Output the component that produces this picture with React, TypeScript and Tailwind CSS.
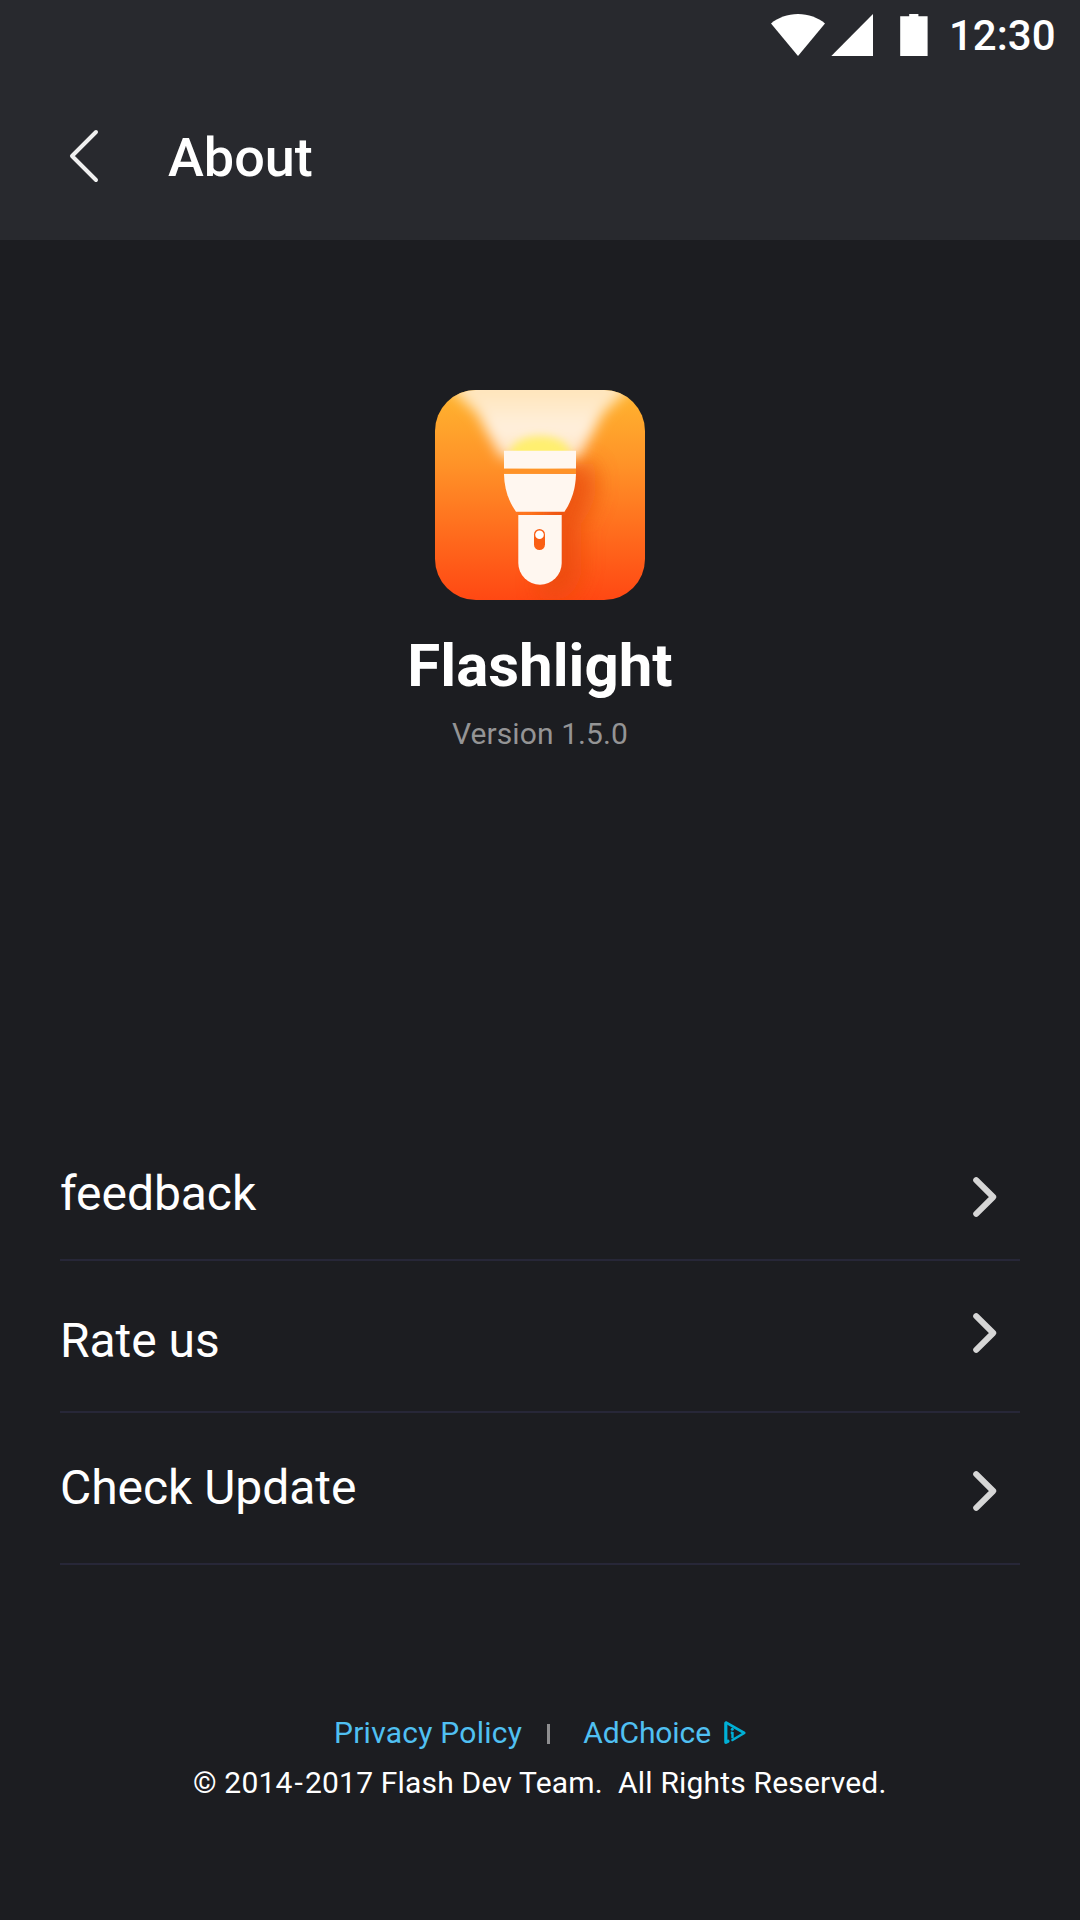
function StatusBar() {
  return (
    <div className="flex h-[72px] items-start">
      <svg className="mt-[14px] ml-[771px] h-[42px] w-[54px]" viewBox="0 0 54 42" fill="#fff">
        <path d="M27 42 0 9.400C7 3.600 16.500 0 27 0s20 3.600 27 9.400Z" />
      </svg>
      <svg className="mt-[14px] ml-[6px] h-[42px] w-[42px]" viewBox="0 0 42 42" fill="#fff">
        <path d="M0.300 42 42 0V42Z" />
      </svg>
      <svg className="mt-[14px] ml-[27px] h-[42px] w-[28px]" viewBox="0 0 28 42" fill="#fff">
        <path d="M9.200 0H18.400V2.200H27.600V42H0.200V2.200H9.200Z" />
      </svg>
      <span className="ml-[21px] text-[42px] leading-[71px] font-medium">12:30</span>
    </div>
  );
}

function Header() {
  return (
    <header className="h-[240px] bg-[#28292e]">
      <StatusBar />
      <div className="flex h-[168px] items-start">
        <svg
          className="mt-[56px] ml-[68px] h-[56px] w-[32px]"
          viewBox="0 0 32 56"
          fill="none"
          stroke="#f0f0f0"
          strokeWidth="4"
          strokeLinecap="round"
          strokeLinejoin="round"
        >
          <path d="M28 4 4 28l24 24" />
        </svg>
        <h1 className="mt-[50px] ml-[68px] text-[54px] leading-[72px] font-medium">About</h1>
      </div>
    </header>
  );
}

function AppIcon() {
  return (
    <svg className="h-[210px] w-[210px]" viewBox="0 0 210 210">
      <defs>
        <linearGradient id="base" x1="0" y1="0" x2="0" y2="1">
          <stop offset="0" stopColor="#ffb530" />
          <stop offset="0.35" stopColor="#ff9328" />
          <stop offset="0.75" stopColor="#ff641b" />
          <stop offset="1" stopColor="#ff4813" />
        </linearGradient>
        <linearGradient id="beam" gradientUnits="userSpaceOnUse" x1="0" y1="0" x2="0" y2="66">
          <stop offset="0" stopColor="#ffe5bb" />
          <stop offset="0.6" stopColor="#fff0de" />
          <stop offset="1" stopColor="#fff0de" stopOpacity="0.85" />
        </linearGradient>
        <filter id="soft" x="-30%" y="-30%" width="160%" height="160%">
          <feGaussianBlur stdDeviation="6.500" />
        </filter>
        <filter id="shade" x="-60%" y="-40%" width="220%" height="180%">
          <feGaussianBlur stdDeviation="11" />
        </filter>
        <filter id="glow" x="-40%" y="-60%" width="180%" height="220%">
          <feGaussianBlur stdDeviation="4" />
        </filter>
        <clipPath id="tile">
          <rect width="210" height="210" rx="41" />
        </clipPath>
        <clipPath id="above">
          <rect width="210" height="80" />
        </clipPath>
      </defs>
      <g clipPath="url(#tile)">
        <rect width="210" height="210" fill="url(#base)" />
        <path d="M110 74H158C166 98 158 118 146 134V184C140 206 128 214 104 208Z" fill="#e84a0a" opacity="0.75" filter="url(#shade)" />
        <g clipPath="url(#above)">
          <path d="M-4 -20H214L168 23 144 68H66L42 23Z" fill="url(#beam)" filter="url(#soft)" />
          <ellipse cx="105" cy="63" rx="30" ry="17" fill="#ffef70" filter="url(#glow)" />
        </g>
        <g fill="#fff7f0">
          <path d="M69 60.700H141V78.700H69Z" />
          <path d="M69 83.700H141C140.700 99 136.500 111 129.500 121.700H81C73.500 111 69.300 99 69 83.700Z" />
          <path d="M83.300 125H126.700V173a21.700 21.700 0 0 1-43.400 0Z" />
        </g>
        <path d="M69 78.700H141V83.700H69Z" fill="#ff9328" />
        <rect x="99" y="139" width="11" height="21" rx="5.500" fill="#fa5f14" />
        <circle cx="104.500" cy="144.800" r="4.300" fill="#fff" />
      </g>
    </svg>
  );
}

function Chevron({ className }: { className: string }) {
  return (
    <svg
      className={className}
      viewBox="0 0 24 40"
      fill="none"
      stroke="#d6d6d6"
      strokeWidth="6"
      strokeLinecap="round"
      strokeLinejoin="round"
    >
      <path d="M3.200 3.200 20.200 20l-17 16.800" />
    </svg>
  );
}

const rows = [
  { label: "feedback", text: "mt-[57px]", icon: "mt-[68px] mr-[23px] h-[40px] w-[24px]" },
  { label: "Rate us", text: "mt-[52px]", icon: "mt-[52px] mr-[23px] h-[40px] w-[24px]" },
  { label: "Check Update", text: "mt-[47px]", icon: "mt-[58px] mr-[23px] h-[40px] w-[24px]" },
];

export default function App() {
  return (
    <div className="flex h-[1920px] w-[1080px] flex-col overflow-hidden bg-[#1c1d21] font-['Roboto',sans-serif] text-white">
      <Header />
      <section className="flex flex-col items-center pt-[150px]">
        <AppIcon />
        <h2 className="mt-[31px] text-[60px] leading-[70px] font-bold">Flashlight</h2>
        <p className="mt-[15px] text-[30px] leading-[36px] tracking-[0.1px] text-[#949495]">Version 1.5.0</p>
      </section>
      <ul className="mt-[357px] px-[60px]">
        {rows.map((row) => (
          <li key={row.label} className="flex h-[152px] items-start justify-between border-b-2 border-[#272738]">
            <span className={`${row.text} text-[48px] leading-[56px] tracking-[-0.05px]`}>{row.label}</span>
            <Chevron className={row.icon} />
          </li>
        ))}
      </ul>
      <footer className="mt-[143px] text-[30px] leading-[50px]">
        <div className="flex h-[50px] items-start text-[#50c0f2]">
          <a className="ml-[334px] tracking-[0.25px]">Privacy Policy</a>
          <i className="mt-[16px] ml-[25px] h-[20px] w-[3px] bg-[#8e8e90]" />
          <a className="ml-[33px] tracking-[-0.1px]">AdChoice</a>
          <svg
            className="mt-[12px] ml-[12px] h-[25px] w-[24px]"
            viewBox="0 0 24 25"
            fill="none"
            stroke="#00b0d6"
            strokeWidth="2.600"
            strokeLinejoin="round"
            strokeLinecap="round"
          >
            <path d="M9.500 20 21.300 13 3.300 2.600" />
            <path d="M2.800 3V22.300L5 21.200" strokeWidth="3.200" />
            <path d="M9.500 12V18.200M7.800 12.800H9.500" strokeWidth="2.400" strokeLinecap="butt" />
            <circle cx="9.300" cy="9.300" r="1.500" fill="#00b0d6" stroke="none" />
          </svg>
        </div>
        <p className="ml-[193px] whitespace-pre tracking-[0.18px]">
          {"© 2014"}
          <span className="mx-[2px]">-</span>
          {"2017 Flash Dev Team.  All Rights Reserved."}
        </p>
      </footer>
    </div>
  );
}
